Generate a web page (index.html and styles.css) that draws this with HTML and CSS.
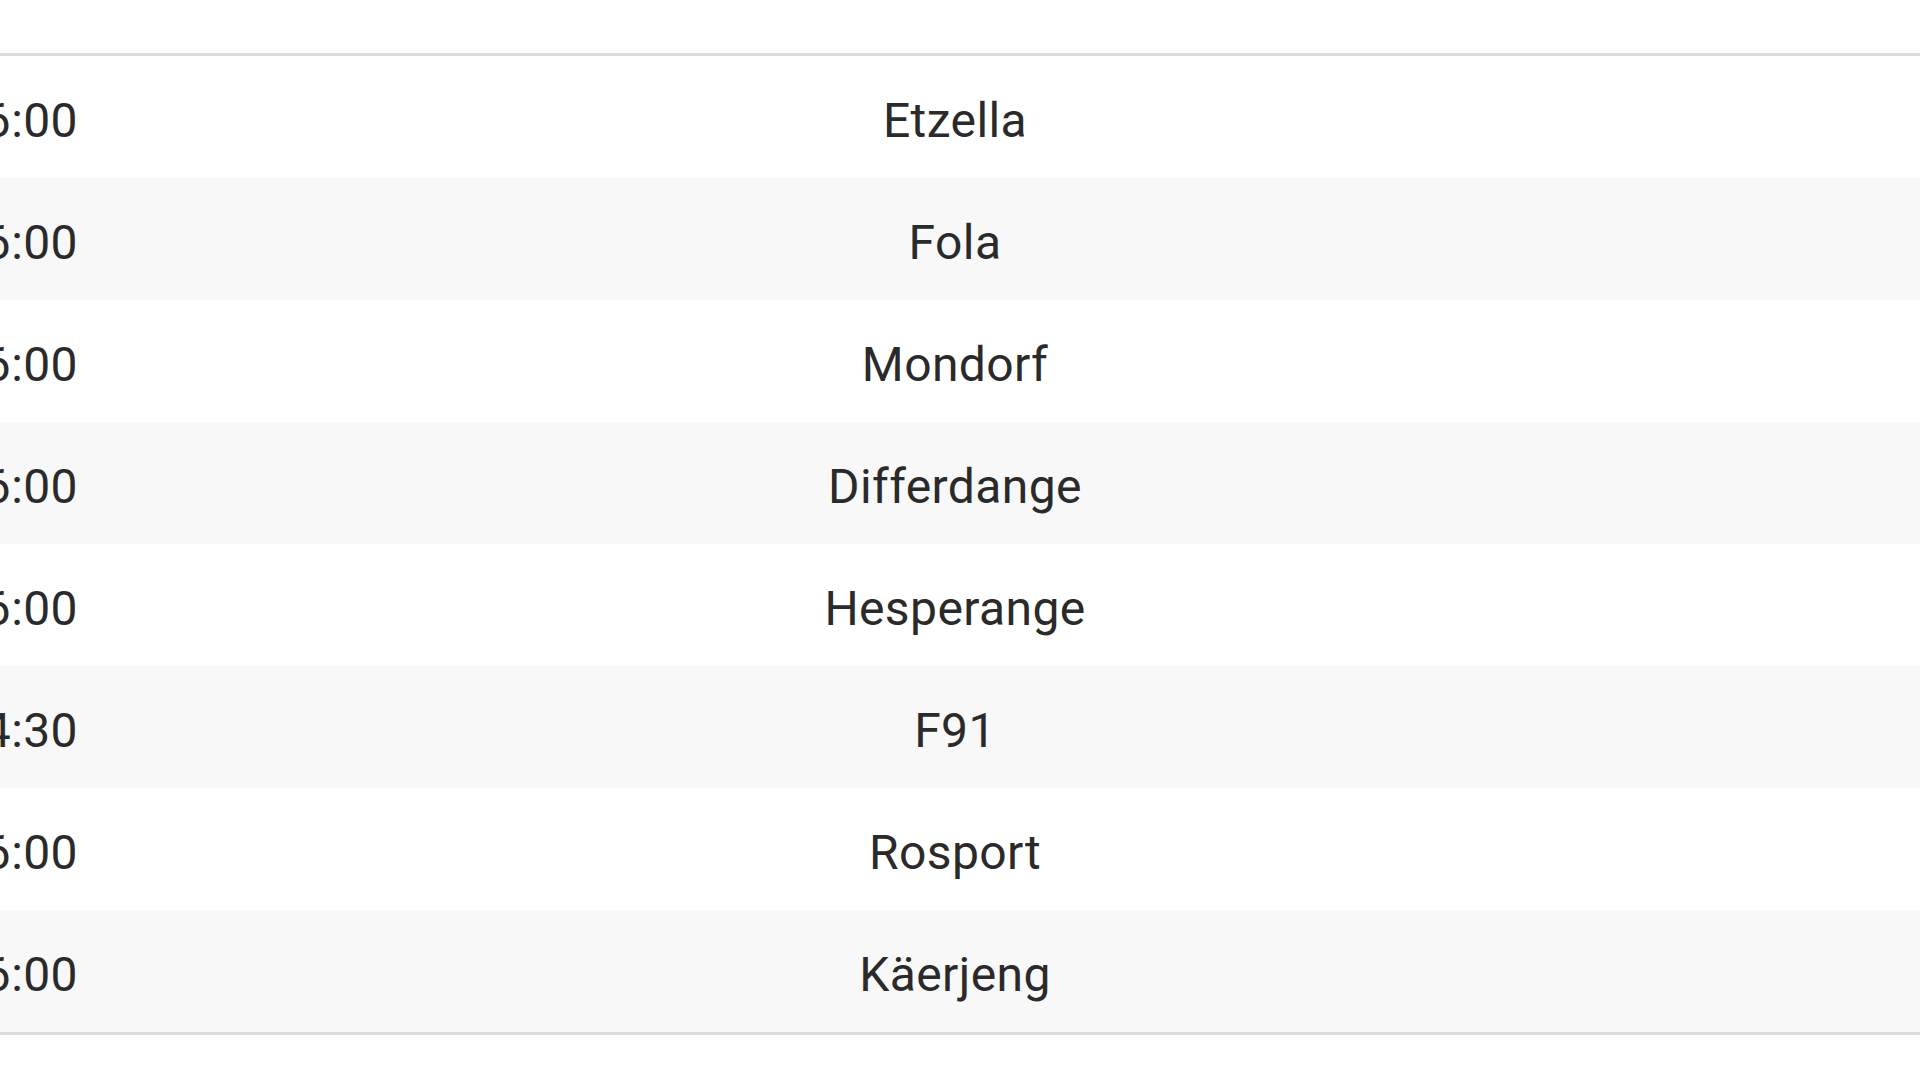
FILE: index.html
```html
<!DOCTYPE html>
<html lang="fr">
<head>
<meta charset="utf-8">
<title>Matches</title>
<link rel="stylesheet" href="styles.css">
</head>
<body>
<div class="page">
  <div class="fixtures">
    <div class="row"><div class="time">16:00</div><div class="team">Etzella</div><div class="rest"></div></div>
    <div class="row alt"><div class="time">16:00</div><div class="team">Fola</div><div class="rest"></div></div>
    <div class="row"><div class="time">16:00</div><div class="team">Mondorf</div><div class="rest"></div></div>
    <div class="row alt"><div class="time">16:00</div><div class="team">Differdange</div><div class="rest"></div></div>
    <div class="row"><div class="time">16:00</div><div class="team">Hesperange</div><div class="rest"></div></div>
    <div class="row alt"><div class="time">14:30</div><div class="team">F91</div><div class="rest"></div></div>
    <div class="row"><div class="time">16:00</div><div class="team">Rosport</div><div class="rest"></div></div>
    <div class="row alt"><div class="time">16:00</div><div class="team">Käerjeng</div><div class="rest"></div></div>
  </div>
</div>
</body>
</html>
```
FILE: styles.css
```css
html, body {
  margin: 0;
  padding: 0;
  background: #ffffff;
}
body {
  width: 1920px;
  height: 1080px;
  overflow: hidden;
  font-family: Roboto, "Liberation Sans", sans-serif;
  color: #2a2a2a;
}
.page {
  padding-top: 53px;
}
.fixtures {
  margin-left: -122px;
  border-top: 3px solid #dcdcdc;
  border-bottom: 3px solid #dcdcdc;
}
.row {
  display: grid;
  grid-template-columns: 200px 1754px 88px;
  height: 122px;
  align-items: center;
  background: #ffffff;
  font-size: 48px;
  letter-spacing: 0.4px;
}
.row.alt {
  background: #f8f8f8;
}
.time {
  text-align: right;
  padding-top: 6px;
}
.team {
  text-align: center;
  padding-top: 6px;
}
```
